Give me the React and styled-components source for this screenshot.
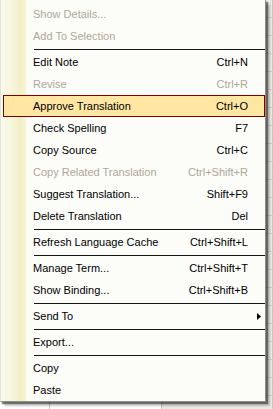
import React from 'react';
import styled, { createGlobalStyle } from 'styled-components';

const GlobalStyle = createGlobalStyle`
  html, body {
    margin: 0;
    padding: 0;
    background: #ffffff;
  }
  body {
    font-family: "Liberation Sans", Arial, sans-serif;
    font-size: 11px;
  }
`;

const Screen = styled.div`
  position: relative;
  width: 273px;
  height: 409px;
  overflow: hidden;
  background: #ffffff;
`;

// the grid that sits behind the popup
const Grid = styled.div`
  display: flex;
  flex-direction: column;
`;

const GridRow = styled.div`
  display: grid;
  grid-template-columns: 50px 112px 1fr;
  height: 17px;
  border-bottom: 1px solid #d6d3ce;
`;

const GridCell = styled.div`
  border-right: 1px solid #c8c5be;
  background: ${p => (p.$tinted ? '#ecebe6' : '#ffffff')};
  font-size: 11px;
  color: #000;
  padding-left: 2px;
  line-height: 17px;
  overflow: hidden;
  white-space: nowrap;
`;

const Menu = styled.div`
  position: absolute;
  top: 0;
  left: 0;
  width: 266px;
  box-sizing: border-box;
  padding: 3px 0 0 0;
  background: linear-gradient(
      to right,
      #fbfbf0 0px,
      #f8f6dc 10px,
      #f3efc6 20px,
      #f7f4d4 24px,
      #fcfcf9 26px
    );
  border-left: 1px solid #e4e2d8;
  border-right: 1px solid #8e8b80;
  border-bottom: 1px solid #8e8b80;
  box-shadow: 2px 2px 1px rgba(0, 0, 0, 0.45), 4px 4px 2px rgba(0, 0, 0, 0.22);
`;

const Item = styled.div`
  display: flex;
  align-items: center;
  box-sizing: border-box;
  height: 22px;
  margin-left: 2px;
  padding: 0 16px 0 29px;
  border: 1px solid ${p => (p.$active ? '#800000' : 'transparent')};
  background: ${p => (p.$active ? '#ffe7a3' : 'transparent')};
  color: ${p => (p.$disabled ? '#aca899' : '#000000')};
  white-space: nowrap;
`;

const Label = styled.span`
  flex: 1;
`;

const Shortcut = styled.span`
  text-align: right;
`;

const SubArrow = styled.svg`
  width: 4px;
  height: 7px;
  margin-right: -13px;
  display: block;
`;

const Separator = styled.div`
  height: 4px;
  display: flex;
  align-items: center;
  padding-left: 33px;

  &::after {
    content: '';
    flex: 1;
    height: 1px;
    background: #141414;
  }
`;

const items = [
  { label: 'Show Details...', disabled: true },
  { label: 'Add To Selection', disabled: true },
  { sep: true },
  { label: 'Edit Note', key: 'Ctrl+N' },
  { label: 'Revise', key: 'Ctrl+R', disabled: true },
  { label: 'Approve Translation', key: 'Ctrl+O', active: true },
  { label: 'Check Spelling', key: 'F7' },
  { label: 'Copy Source', key: 'Ctrl+C' },
  { label: 'Copy Related Translation', key: 'Ctrl+Shift+R', disabled: true },
  { label: 'Suggest Translation...', key: 'Shift+F9' },
  { label: 'Delete Translation', key: 'Del' },
  { sep: true },
  { label: 'Refresh Language Cache', key: 'Ctrl+Shift+L' },
  { sep: true },
  { label: 'Manage Term...', key: 'Ctrl+Shift+T' },
  { label: 'Show Binding...', key: 'Ctrl+Shift+B' },
  { sep: true },
  { label: 'Send To', submenu: true },
  { sep: true },
  { label: 'Export...' },
  { sep: true },
  { label: 'Copy' },
  { label: 'Paste' },
];

const rows = Array.from({ length: 24 }, (_, i) => i);

export default function App() {
  return (
    <>
      <GlobalStyle />
      <Screen>
        <Grid>
          {rows.map(r => (
            <GridRow key={r}>
              <GridCell>{r === 23 ? 'IF' : ''}</GridCell>
              <GridCell>{''}</GridCell>
              <GridCell $tinted>{r === 23 ? 'Hill' : ''}</GridCell>
            </GridRow>
          ))}
        </Grid>
        <Menu>
          {items.map((it, i) =>
            it.sep ? (
              <Separator key={i} />
            ) : (
              <Item key={i} $active={it.active} $disabled={it.disabled}>
                <Label>{it.label}</Label>
                {it.key && <Shortcut>{it.key}</Shortcut>}
                {it.submenu && (
                  <SubArrow viewBox="0 0 4 7">
                    <polygon points="0,0 4,3.5 0,7" fill="#000" />
                  </SubArrow>
                )}
              </Item>
            )
          )}
        </Menu>
      </Screen>
    </>
  );
}
